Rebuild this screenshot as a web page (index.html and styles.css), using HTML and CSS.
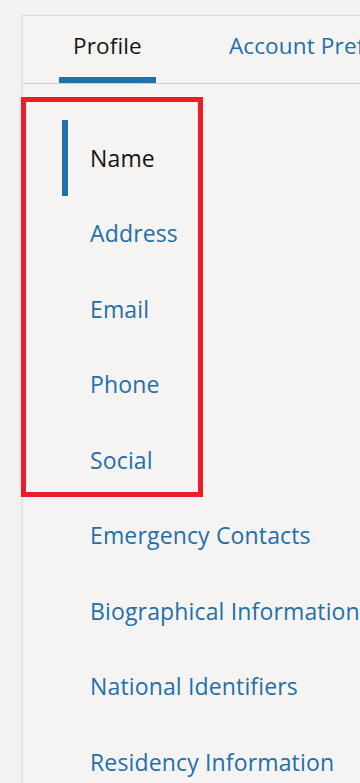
FILE: index.html
```html
<!DOCTYPE html>
<html lang="en">
<head>
<meta charset="utf-8">
<link rel="stylesheet" href="styles.css">
</head>
<body>
<div class="panel">
  <div class="tabs">
    <div class="tab active">Profile</div>
    <div class="tab">Account Preferences</div>
  </div>
  <ul class="nav">
    <li class="item current">Name</li>
    <li class="item">Address</li>
    <li class="item">Email</li>
    <li class="item">Phone</li>
    <li class="item">Social</li>
    <li class="item">Emergency Contacts</li>
    <li class="item">Biographical Information</li>
    <li class="item">National Identifiers</li>
    <li class="item">Residency Information</li>
  </ul>
  <div class="highlight"></div>
</div>
</body>
</html>
```
FILE: styles.css
```css
html, body {
  margin: 0;
  padding: 0;
  background: #f3f3f3;
  overflow: hidden;
  height: 783px;
}
body {
  font-family: "Open Sans", "Noto Sans", sans-serif;
  padding: 15px 0 0 22px;
}
.panel {
  position: relative;
  background: #f5f4f2;
  border-top: 1px solid #dddcdb;
  border-left: 1px solid #dddcdb;
  box-shadow: -2px 0 3px rgba(0,0,0,0.04);
  width: 400px;
  height: 900px;
}
.tabs {
  display: flex;
  gap: 59px;
  padding-left: 36px;
  height: 67px;
  border-bottom: 1px solid #cfcecd;
  white-space: nowrap;
}
.tab {
  font-size: 22.5px;
  color: #1f6fab;
  padding: 14px 14px 0;
  box-sizing: border-box;
  height: 67px;
  letter-spacing: 0.15px;
}
.tab.active {
  color: #161513;
  border-bottom: 6px solid #2270a9;
}
.nav {
  list-style: none;
  margin: 36px 0 0;
  padding: 0 0 0 39px;
}
.item {
  height: 75.5px;
  display: flex;
  align-items: center;
  padding-left: 28px;
  font-size: 23px;
  color: #1f6fab;
  white-space: nowrap;
  letter-spacing: 0.15px;
}
.item.current {
  color: #161513;
  border-left: 6px solid #2270a9;
  padding-left: 22px;
}
.highlight {
  position: absolute;
  left: -2px;
  top: 81px;
  width: 172px;
  height: 390px;
  border: 5px solid #ee1c25;
}
```
